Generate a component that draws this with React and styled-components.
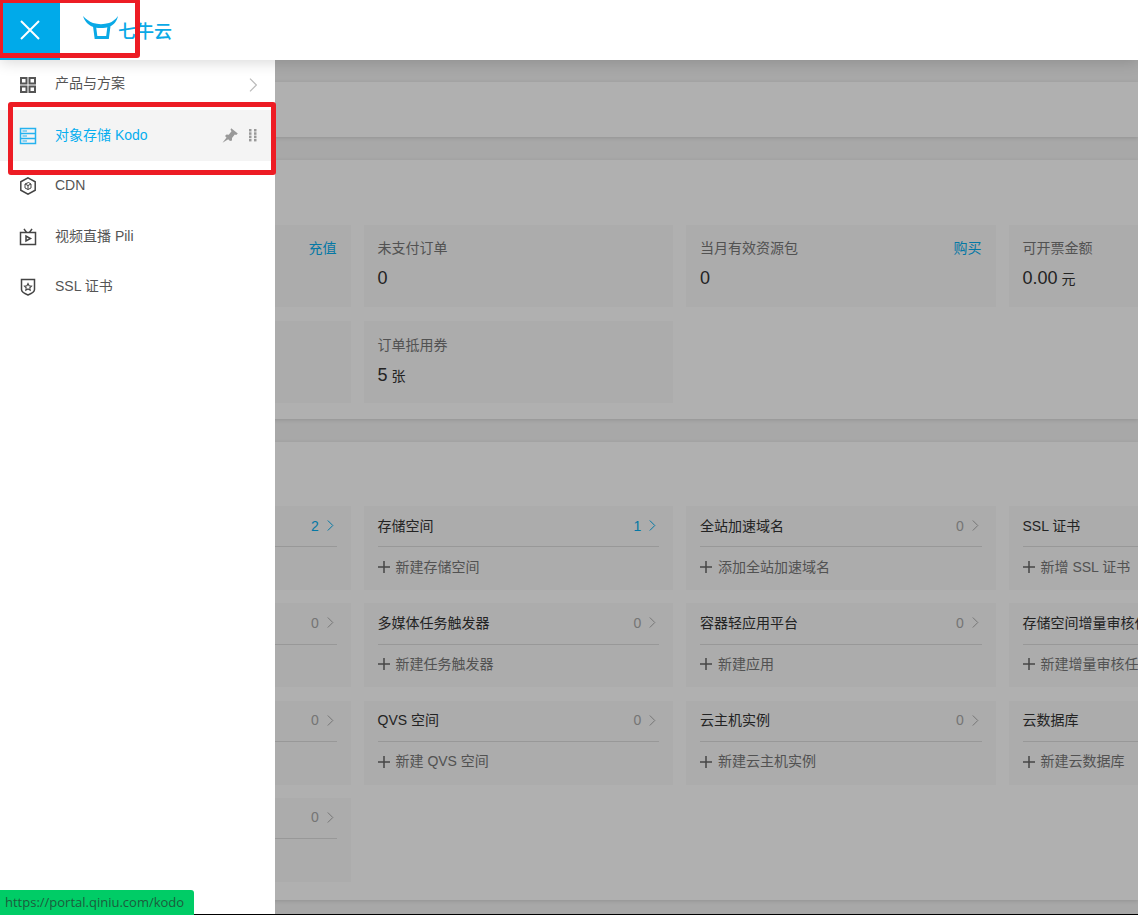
import React from "react";
import styled, { createGlobalStyle } from "styled-components";

const Global = createGlobalStyle`
  html, body { margin: 0; padding: 0; background: #fff; overflow: hidden; }
  * { box-sizing: border-box; }
  body { font-family: "Liberation Sans", "Noto Sans CJK SC", sans-serif; font-size: 14px; color: #333; }
`;

const Stage = styled.div`
  position: relative;
  width: 1138px;
  height: 915px;
  overflow: hidden;
  background: #f3f3f3;
`;

const Header = styled.header`
  position: relative;
  z-index: 3;
  display: flex;
  align-items: center;
  height: 60px;
  background: #fff;
  box-shadow: 0 2px 14px rgba(0, 0, 0, 0.16);
`;

const CloseButton = styled.button`
  display: flex;
  align-items: center;
  justify-content: center;
  width: 60px;
  height: 60px;
  border: 0;
  padding: 0;
  background: #00aaea;
`;

const Logo = styled.div`
  display: flex;
  align-items: flex-start;
  margin-left: 23px;
  height: 24px;
  margin-top: -4px;
`;

const LogoWord = styled.span`
  font-family: "Noto Sans CJK SC", sans-serif;
  font-size: 18px;
  line-height: 28px;
  color: #0aa9e6;
  margin-left: -1px;
  font-weight: 500;
`;

const Content = styled.main`
  display: flex;
  flex-direction: column;
  gap: 23px;
  padding-top: 22px;
`;

const Panel = styled.section`
  background: #fff;
  box-shadow: 0 1px 4px rgba(0, 0, 0, 0.12);
  padding: ${(p) => p.$top}px 0 ${(p) => p.$bottom}px 41px;
  min-height: ${(p) => p.$min || 0}px;
`;

const CardGrid = styled.div`
  display: grid;
  grid-template-columns: repeat(4, 309.5px);
  column-gap: 13px;
  row-gap: ${(p) => p.$gap}px;
`;

const StatCardBox = styled.div`
  height: 82px;
  background: #f9f9f9;
  padding: 13.4px 14px 0;
`;

const StatHead = styled.div`
  display: flex;
  justify-content: space-between;
  height: 20px;
  line-height: 20px;
  color: #777;
`;

const LinkText = styled.a`
  color: #06aeef;
`;

const StatValue = styled.div`
  margin-top: 9px;
  line-height: 22px;
  font-size: 18px;
  color: #333;
`;

const Unit = styled.span`
  font-size: 14px;
  margin-left: 4px;
`;

const ResourceCardBox = styled.div`
  height: 84px;
  background: #f9f9f9;
  padding: 10px 14px 0;
`;

const ResourceHead = styled.div`
  display: flex;
  align-items: center;
  justify-content: space-between;
  height: 31.3px;
  padding-bottom: 11.3px;
  border-bottom: 1px solid #ddd;
  line-height: 20px;
  color: #333;
  white-space: nowrap;
`;

const Count = styled.span`
  display: flex;
  align-items: center;
  gap: 8px;
  padding-right: 3px;
  color: ${(p) => (p.$on ? "#06aeef" : "#aaa")};
`;

const AddRow = styled.div`
  display: flex;
  align-items: center;
  gap: 6px;
  height: 36.4px;
  color: #777;
  white-space: nowrap;
`;

const PlusMark = styled.svg`
  margin-top: 3px;
  flex: none;
`;

const Scrim = styled.div`
  position: absolute;
  z-index: 1;
  inset: 60px 0 0 0;
  background: rgba(0, 0, 0, 0.31);
`;

const Drawer = styled.aside`
  position: absolute;
  z-index: 2;
  left: 0;
  top: 60px;
  bottom: 0;
  width: 275px;
  background: #fff;
`;

const NavLabel = styled.span`
  flex: 1;
  line-height: 20px;
  margin-bottom: 3px;
`;

const NavRow = styled.div`
  display: flex;
  align-items: center;
  height: 50px;
  padding-left: 19px;
  padding-right: 18px;
  background: ${(p) => (p.$active ? "#f4f4f4" : "transparent")};
  color: ${(p) => (p.$active ? "#06aeef" : "#555")};
  &:nth-child(even) {
    height: 51px;
  }
  &:nth-child(even) ${NavLabel} {
    margin-bottom: 1px;
  }
  &:first-child {
    padding-bottom: 1px;
  }
`;

const NavIcon = styled.span`
  display: flex;
  width: 18px;
  height: 18px;
  margin-right: 18px;
`;

const RowTools = styled.span`
  display: flex;
  align-items: center;
  gap: 11px;
`;

const Annotation = styled.div`
  position: absolute;
  z-index: 4;
  left: ${(p) => p.$x}px;
  top: ${(p) => p.$y}px;
  width: ${(p) => p.$w}px;
  height: ${(p) => p.$h}px;
  border: ${(p) => p.$t}px solid #ed1c24;
  border-radius: 3px;
`;

const StatusBubble = styled.div`
  position: absolute;
  z-index: 6;
  left: 0;
  bottom: 0;
  width: 194px;
  height: 25px;
  padding-left: 5px;
  background: #00cc66;
  border-top-right-radius: 3px;
  font-family: "Open Sans", sans-serif;
  font-size: 13px;
  line-height: 24px;
  color: #1d5b3d;
  white-space: nowrap;
`;

const WindowEdge = styled.div`
  position: absolute;
  z-index: 5;
  left: 0;
  right: 0;
  bottom: 0;
  height: 1px;
  background: #000;
`;

const Chevron = ({ color = "currentColor", h = 11 }) => (
  <svg width={h * 0.6} height={h} viewBox="0 0 6 11" fill="none">
    <path d="M0.5 0.5L5.5 5.5L0.5 10.5" stroke={color} strokeWidth="1" />
  </svg>
);

const Plus = () => (
  <PlusMark width="12" height="12" viewBox="0 0 12 12" fill="none">
    <path d="M6 0V12M0 6H12" stroke="#666" strokeWidth="1.5" />
  </PlusMark>
);

const BullLogo = () => (
  <svg width="36" height="24" viewBox="0 0 36 24" fill="none">
    <path d="M0 0C3 3 6 5.500 10 7C15 8.500 21 8.500 26 7C29.500 5.800 32.500 3.500 35 0C34 5 31 8.800 27 10.500C21 12.500 14 12.500 9 10.500C5 8.800 1.500 5 0 0Z" fill="#0aa9e6" />
    <path d="M11.500 10L13 21.500H24.500L26 10" stroke="#0aa9e6" strokeWidth="3" />
  </svg>
);

const GridIcon = () => (
  <svg width="18" height="18" viewBox="0 0 18 18" fill="none" stroke="#555" strokeWidth="2">
    <rect x="2" y="2" width="5.500" height="5.500" />
    <rect x="10.500" y="2" width="5.500" height="5.500" />
    <rect x="2" y="10.500" width="5.500" height="5.500" />
    <rect x="10.500" y="10.500" width="5.500" height="5.500" />
  </svg>
);

const StorageIcon = () => (
  <svg width="18" height="18" viewBox="0 0 18 18" fill="none" stroke="#25b2ef" strokeWidth="1.500">
    <rect x="1.500" y="1.500" width="15" height="15" />
    <path d="M1.500 6.500H16.500M1.500 11.500H16.500" />
    <path d="M3.500 4H8M3.500 9H8M3.500 14H8" strokeWidth="1" />
  </svg>
);

const HexIcon = () => (
  <svg width="18" height="18" viewBox="0 0 18 18" fill="none" stroke="#444" strokeWidth="1.500">
    <path d="M9 0.800L16.200 4.800V13.200L9 17.200L1.800 13.200V4.800Z" />
    <path d="M6 7L9.500 5.500L12 7V11L9 12.500L6 11ZM9 8V12.500M6 7L9 8.500L12 7" strokeWidth="1" />
  </svg>
);

const TvIcon = () => (
  <svg width="18" height="18" viewBox="0 0 18 18" fill="none" stroke="#444" strokeWidth="1.500">
    <rect x="1.500" y="4.500" width="15" height="12" />
    <path d="M5 0.800L7.500 4.500M13 0.800L10.500 4.500" />
    <path d="M7 8V13L11.500 10.500Z" fill="none" />
  </svg>
);

const ShieldIcon = () => (
  <svg width="18" height="18" viewBox="0 0 18 18" fill="none" stroke="#444" strokeWidth="1.500">
    <path d="M2.500 1.500H15.500V11.500C15.500 13.500 12 15.800 9 17C6 15.800 2.500 13.500 2.500 11.500Z" />
    <path d="M9 5.500L10.100 7.800L12.500 8.100L10.800 9.800L11.200 12.200L9 11L6.800 12.200L7.200 9.800L5.500 8.100L7.900 7.800Z" strokeWidth="1.100" />
  </svg>
);

const PinIcon = () => (
  <svg width="16" height="15" viewBox="0 0 16 15" fill="#999">
    <path d="M9.200 0.200L15.800 5.500L14.200 7L12.800 6.500L10 10L10 12.500L8 13L3 8L4.500 6.500L6.800 6.800L9.500 3.300L8.500 1.800Z" />
    <path d="M5 9L0.500 14.800L7 10.800Z" />
  </svg>
);

const DragIcon = () => (
  <svg width="8" height="13" viewBox="0 0 8 13" fill="#999">
    {[0, 3.3, 6.6, 9.9].map((y) => (
      <React.Fragment key={y}>
        <rect x="0" y={y} width="2.500" height="2.500" />
        <rect x="5" y={y} width="2.500" height="2.500" />
      </React.Fragment>
    ))}
  </svg>
);

const navItems = [
  { label: "产品与方案", icon: <GridIcon />, arrow: true },
  { label: "对象存储 Kodo", icon: <StorageIcon />, active: true },
  { label: "CDN", icon: <HexIcon /> },
  { label: "视频直播 Pili", icon: <TvIcon /> },
  { label: "SSL 证书", icon: <ShieldIcon /> },
];

const stats = [
  { link: "充值" },
  { label: "未支付订单", value: "0" },
  { label: "当月有效资源包", value: "0", link: "购买" },
  { label: "可开票金额", value: "0.00", unit: "元" },
  {},
  { label: "订单抵用券", value: "5", unit: "张" },
];

const resources = [
  { title: "", count: 2, add: "" },
  { title: "存储空间", count: 1, add: "新建存储空间" },
  { title: "全站加速域名", count: 0, add: "添加全站加速域名" },
  { title: "SSL 证书", count: 0, add: "新增 SSL 证书" },
  { title: "", count: 0, add: "" },
  { title: "多媒体任务触发器", count: 0, add: "新建任务触发器" },
  { title: "容器轻应用平台", count: 0, add: "新建应用" },
  { title: "存储空间增量审核任务", count: 0, add: "新建增量审核任务" },
  { title: "", count: 0, add: "" },
  { title: "QVS 空间", count: 0, add: "新建 QVS 空间" },
  { title: "云主机实例", count: 0, add: "新建云主机实例" },
  { title: "云数据库", count: 0, add: "新建云数据库" },
  { title: "", count: 0, add: "" },
];

export default function App() {
  return (
    <Stage>
      <Global />
      <Header>
        <CloseButton aria-label="关闭">
          <svg width="20" height="20" viewBox="0 0 20 20" fill="none">
            <path d="M1 1L19 19M19 1L1 19" stroke="#fff" strokeWidth="2" />
          </svg>
        </CloseButton>
        <Logo>
          <BullLogo />
          <LogoWord>七牛云</LogoWord>
        </Logo>
      </Header>

      <Content>
        <Panel $top={0} $bottom={0} $min={55} />
        <Panel $top={65} $bottom={15.9}>
          <CardGrid $gap={14.2}>
            {stats.map((s, i) => (
              <StatCardBox key={i}>
                <StatHead>
                  <span>{s.label}</span>
                  {s.link && <LinkText>{s.link}</LinkText>}
                </StatHead>
                {s.value && (
                  <StatValue>
                    {s.value}
                    {s.unit && <Unit>{s.unit}</Unit>}
                  </StatValue>
                )}
              </StatCardBox>
            ))}
          </CardGrid>
        </Panel>
        <Panel $top={64} $bottom={18}>
          <CardGrid $gap={13.3}>
            {resources.map((r, i) => (
              <ResourceCardBox key={i}>
                <ResourceHead>
                  <span>{r.title}</span>
                  <Count $on={r.count > 0}>
                    {r.count}
                    <Chevron />
                  </Count>
                </ResourceHead>
                {r.add && (
                  <AddRow>
                    <Plus />
                    {r.add}
                  </AddRow>
                )}
              </ResourceCardBox>
            ))}
          </CardGrid>
        </Panel>
      </Content>

      <Scrim />
      <Drawer>
        {navItems.map((n) => (
          <NavRow key={n.label} $active={n.active}>
            <NavIcon>{n.icon}</NavIcon>
            <NavLabel>{n.label}</NavLabel>
            {n.arrow && <Chevron color="#bbb" h={14} />}
            {n.active && (
              <RowTools>
                <PinIcon />
                <DragIcon />
              </RowTools>
            )}
          </NavRow>
        ))}
      </Drawer>

      <Annotation $x={-2} $y={-2} $w={142} $h={60} $t={5} />
      <Annotation $x={8} $y={102} $w={268} $h={73} $t={5} />
      <WindowEdge />
      <StatusBubble>https://portal.qiniu.com/kodo</StatusBubble>
    </Stage>
  );
}
